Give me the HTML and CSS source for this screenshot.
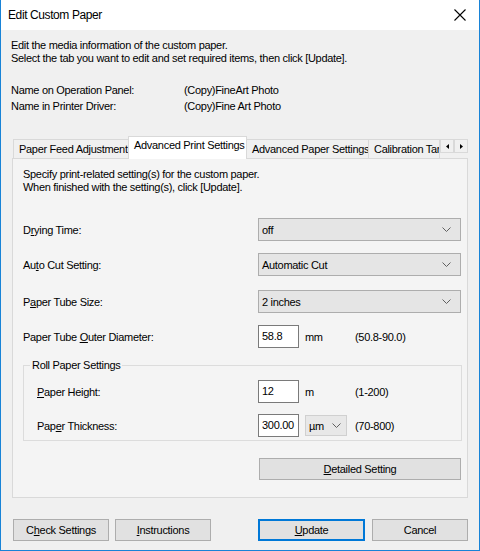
FILE: index.html
```html
<!DOCTYPE html>
<html>
<head>
<meta charset="utf-8">
<link rel="stylesheet" href="styles.css">
</head>
<body>
<div class="window">
  <div class="titlebar">
    <span class="title">Edit Custom Paper</span>
    <svg class="close" width="12" height="12" viewBox="0 0 12 12"><path d="M0.5 0.5L11.5 11.5M11.5 0.5L0.5 11.5" stroke="#000" stroke-width="1.1" fill="none"/></svg>
  </div>
  <div class="content">
    <div class="intro">
      <div>Edit the media information of the custom paper.</div>
      <div>Select the tab you want to edit and set required items, then click [Update].</div>
    </div>
    <div class="names">
      <div class="nrow"><span class="nlabel">Name on Operation Panel:</span><span>(Copy)FineArt Photo</span></div>
      <div class="nrow"><span class="nlabel">Name in Printer Driver:</span><span>(Copy)Fine Art Photo</span></div>
    </div>
    <div class="tabs">
      <div class="tab t1">Paper Feed Adjustment</div>
      <div class="tab t2 active">Advanced Print Settings</div>
      <div class="tab t3">Advanced Paper Settings</div>
      <div class="tab t4">Calibration Tar</div>
      <div class="scrollers">
        <div class="sbtn"><svg width="3" height="5" viewBox="0 0 3 5"><path d="M3 0L0 2.5L3 5Z" fill="#000"/></svg></div>
        <div class="sbtn"><svg width="3" height="5" viewBox="0 0 3 5"><path d="M0 0L3 2.5L0 5Z" fill="#000"/></svg></div>
      </div>
    </div>
    <div class="panel">
      <div class="ptext">
        <div>Specify print-related setting(s) for the custom paper.</div>
        <div>When finished with the setting(s), click [Update].</div>
      </div>
      <div class="row r1">
        <span class="lbl">D<u>r</u>ying Time:</span>
        <div class="select wide"><span>off</span><svg class="chev" width="9" height="5" viewBox="0 0 9 5"><path d="M0.5 0.5L4.5 4.5L8.5 0.5" stroke="#606060" fill="none"/></svg></div>
      </div>
      <div class="row r2">
        <span class="lbl">Au<u>t</u>o Cut Setting:</span>
        <div class="select wide"><span>Automatic Cut</span><svg class="chev" width="9" height="5" viewBox="0 0 9 5"><path d="M0.5 0.5L4.5 4.5L8.5 0.5" stroke="#606060" fill="none"/></svg></div>
      </div>
      <div class="row r3">
        <span class="lbl">P<u>a</u>per Tube Size:</span>
        <div class="select wide"><span>2 inches</span><svg class="chev" width="9" height="5" viewBox="0 0 9 5"><path d="M0.5 0.5L4.5 4.5L8.5 0.5" stroke="#606060" fill="none"/></svg></div>
      </div>
      <div class="row r4">
        <span class="lbl">Paper Tube <u>O</u>uter Diameter:</span>
        <div class="input">58.8</div>
        <span class="unit">mm</span>
        <span class="range">(50.8-90.0)</span>
      </div>
      <fieldset class="group">
        <legend>Roll Paper Settings</legend>
        <div class="row g1">
          <span class="lbl glbl"><u>P</u>aper Height:</span>
          <div class="input">12</div>
          <span class="unit">m</span>
          <span class="range">(1-200)</span>
        </div>
        <div class="row g2">
          <span class="lbl glbl">Pap<u>e</u>r Thickness:</span>
          <div class="input">300.00</div>
          <div class="select small"><span>µm</span><svg class="chev" width="9" height="5" viewBox="0 0 9 5"><path d="M0.5 0.5L4.5 4.5L8.5 0.5" stroke="#606060" fill="none"/></svg></div>
          <span class="range r2range">(70-800)</span>
        </div>
      </fieldset>
      <div class="detail-row">
        <div class="btn detail"><u>D</u>etailed Setting</div>
      </div>
    </div>
    <div class="footer">
      <div class="btn fb">C<u>h</u>eck Settings</div>
      <div class="btn fb"><u>I</u>nstructions</div>
      <div class="spacer"></div>
      <div class="btn fb primary"><u>U</u>pdate</div>
      <div class="btn fb">Cancel</div>
    </div>
  </div>
</div>
</body>
</html>
```
FILE: styles.css
```css
* { box-sizing: border-box; }
html, body { margin: 0; padding: 0; }
body {
  font-family: "Liberation Sans", Arial, sans-serif;
  font-size: 11px;
  letter-spacing: -0.3px;
  color: #000;
  background: #fff;
}
u { text-decoration: underline; text-underline-offset: 1px; }
.window {
  width: 480px;
  height: 551px;
  border: 1px solid #1883d7;
  border-top: none;
  background: #f0f0f0;
  display: flex;
  flex-direction: column;
}
.titlebar {
  height: 30px;
  background: #fff;
  display: flex;
  align-items: center;
  justify-content: space-between;
  padding: 0 13px 0 7px;
}
.title { font-size: 12px; letter-spacing: -0.4px; }
.close { display: block; }
.content {
  padding: 0 11px 0 10px;
  flex: 1;
  display: flex;
  flex-direction: column;
}
.intro { margin-top: 9px; line-height: 12.5px; }
.names { margin-top: 18px; }
.nrow { display: flex; height: 16px; line-height: 16px; }
.nlabel { width: 173px; }
.tabs {
  margin-top: 22px;
  margin-left: 2px;
  display: flex;
  align-items: flex-end;
  height: 22px;
  position: relative;
}
.tab {
  height: 19px;
  line-height: 19px;
  border: 1px solid #d9d9d9;
  border-bottom: none;
  background: #f0f0f0;
  padding: 0 5px;
  margin-right: -1px;
  white-space: nowrap;
  overflow: hidden;
}
.t1 { width: 116px; }
.t2 { width: 119px; }
.t3 { width: 123px; }
.t4 { width: 72px; }
.tab.active {
  line-height: 17px;
  background: #fff;
  position: relative;
  z-index: 2;
  margin-bottom: -1px;
  height: 23px;
}
.scrollers {
  position: absolute;
  right: 0;
  top: 3px;
  display: flex;
}
.sbtn {
  width: 14px;
  height: 14px;
  border: 1px solid #d9d9d9;
  background: #f0f0f0;
  display: flex;
  align-items: center;
  justify-content: center;
}
.panel {
  width: 456px;
  height: 340px;
  margin-left: 1px;
  border: 1px solid #d9d9d9;
  background: #f4f4f4;
  padding: 9px 6px 0 10px;
  position: relative;
  z-index: 1;
}
.ptext { line-height: 13px; }
.row {
  display: flex;
  align-items: center;
  height: 23px;
}
.lbl { width: 235px; flex: none; }
.r1 { margin-top: 24px; }
.r2 { margin-top: 12px; }
.r3 { margin-top: 14px; }
.r4 { margin-top: 12px; }
.select {
  height: 23px;
  border: 1px solid #adadad;
  background: #e5e5e5;
  display: flex;
  align-items: center;
  justify-content: space-between;
  padding: 0 9px 0 3px;
}
.select.wide { width: 203px; }
.select.small { width: 42px; height: 21px; margin-left: 6px; border-color: #d0d0d0; background: #e8e8e8; padding-right: 5px; }
.chev { display: block; }
.input {
  width: 41px;
  height: 23px;
  border: 1px solid #7a7a7a;
  background: #fff;
  padding: 0 3px;
  line-height: 20px;
  flex: none;
}
.unit { width: 50px; margin-left: 6px; }
.r2range { margin-left: 8px; }
.group {
  margin: 11px 0 0 0;
  width: 439px;
  height: 82px;
  border: 1px solid #dcdcdc;
  padding: 0;
  min-width: 0;
}
.group legend {
  padding: 0 2px;
  margin-left: 6px;
  line-height: 12px;
}
.group .lbl.glbl { width: 234px; padding-left: 13px; }
.g1 { margin-top: 9px; }
.g2 { margin-top: 11px; }
.btn {
  height: 22px;
  border: 1px solid #adadad;
  background: #e1e1e1;
  display: flex;
  align-items: center;
  justify-content: center;
}
.detail-row { display: flex; margin-top: 17px; padding-left: 236px; }
.detail { width: 202px; }
.footer {
  display: flex;
  margin-top: 21px;
  padding-left: 2px;
}
.fb { width: 96px; margin-right: 6px; }
.fb:nth-child(2) { margin-right: 0; }
.spacer { width: 47px; }
.primary { width: 107px; border: 2px solid #0078d7; margin-right: 7px; }
.footer .fb:last-child { margin-right: 0; }
```
